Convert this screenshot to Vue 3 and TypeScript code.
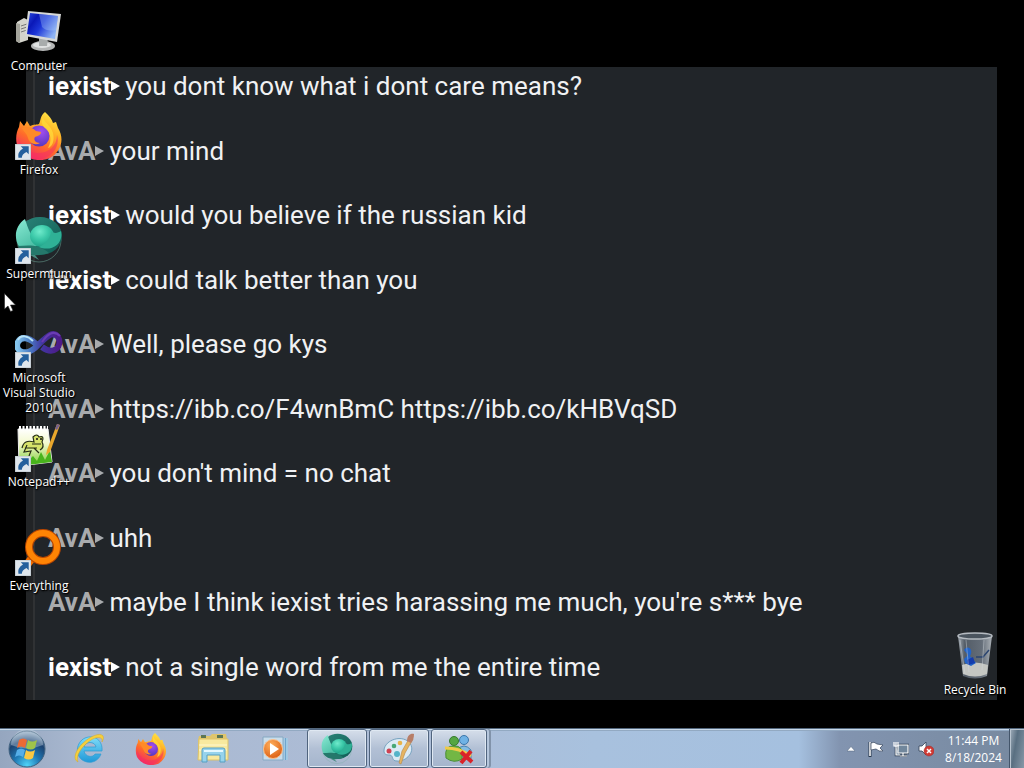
<script setup lang="ts">
interface Message { author: string; text: string }
interface Shortcut { icon: string; label: string; linked: boolean }
interface TaskItem { icon: string; label: string; running: boolean }

const messages: Message[] = [
  { author: 'iexist', text: 'you dont know what i dont care means?' },
  { author: 'AvA', text: 'your mind' },
  { author: 'iexist', text: 'would you believe if the russian kid' },
  { author: 'iexist', text: 'could talk better than you' },
  { author: 'AvA', text: 'Well, please go kys' },
  { author: 'AvA', text: 'https://ibb.co/F4wnBmC https://ibb.co/kHBVqSD' },
  { author: 'AvA', text: "you don't mind = no chat" },
  { author: 'AvA', text: 'uhh' },
  { author: 'AvA', text: "maybe I think iexist tries harassing me much, you're s*** bye" },
  { author: 'iexist', text: 'not a single word from me the entire time' },
]

const shortcuts: Shortcut[] = [
  { icon: 'computer', label: 'Computer', linked: false },
  { icon: 'firefox', label: 'Firefox', linked: true },
  { icon: 'supermium', label: 'Supermium', linked: true },
  { icon: 'studio', label: 'Microsoft Visual Studio 2010', linked: true },
  { icon: 'notepad', label: 'Notepad++', linked: true },
  { icon: 'everything', label: 'Everything', linked: true },
]

const tasks: TaskItem[] = [
  { icon: 'ie', label: 'Internet Explorer', running: false },
  { icon: 'firefox', label: 'Firefox', running: false },
  { icon: 'explorer', label: 'Windows Explorer', running: false },
  { icon: 'player', label: 'Windows Media Player', running: false },
  { icon: 'supermium', label: 'Supermium', running: true },
  { icon: 'paint', label: 'Paint', running: true },
  { icon: 'messenger', label: 'Messenger', running: true },
]
</script>

<template>
  <div class="screen">
    <svg class="sprites" aria-hidden="true">
      <defs>
        <linearGradient id="gBlue" x1="0" y1="0" x2="1" y2="0.6">
          <stop offset="0" stop-color="#2a4ae0" /><stop offset="0.3" stop-color="#0a18b8" />
          <stop offset="0.55" stop-color="#1c36d8" /><stop offset="1" stop-color="#8fb4f4" />
        </linearGradient>
        <linearGradient id="gFox" x1="0.85" y1="0" x2="0.3" y2="1">
          <stop offset="0" stop-color="#fff04a" /><stop offset="0.35" stop-color="#ffb327" />
          <stop offset="0.65" stop-color="#ff6a2a" /><stop offset="1" stop-color="#f0246e" />
        </linearGradient>
        <radialGradient id="gGlobe" cx="0.6" cy="0.3" r="0.8">
          <stop offset="0" stop-color="#a44df0" /><stop offset="1" stop-color="#4a35b8" />
        </radialGradient>
        <radialGradient id="gOrbTeal" cx="0.4" cy="0.3" r="0.7">
          <stop offset="0" stop-color="#6feacb" /><stop offset="0.5" stop-color="#3cc9a9" /><stop offset="1" stop-color="#1fa188" />
        </radialGradient>
        <linearGradient id="gTeal" x1="0" y1="0" x2="1" y2="1">
          <stop offset="0" stop-color="#2b8579" /><stop offset="1" stop-color="#0f5c54" />
        </linearGradient>
        <linearGradient id="gLeaf" x1="0" y1="0" x2="0.5" y2="1">
          <stop offset="0" stop-color="#8aead4" /><stop offset="1" stop-color="#4cbfa6" />
        </linearGradient>
        <linearGradient id="gStudio" x1="0" y1="0" x2="1" y2="0">
          <stop offset="0" stop-color="#86c6ee" /><stop offset="0.3" stop-color="#4a7cc4" />
          <stop offset="0.6" stop-color="#4234a0" /><stop offset="1" stop-color="#4d1a88" />
        </linearGradient>
        <linearGradient id="gNote" x1="0" y1="0" x2="0" y2="1">
          <stop offset="0" stop-color="#ffffff" /><stop offset="0.4" stop-color="#f3f9cc" /><stop offset="1" stop-color="#7ccb3a" />
        </linearGradient>
        <radialGradient id="gStart" cx="0.5" cy="0.95" r="0.9">
          <stop offset="0" stop-color="#4fd4f8" /><stop offset="0.4" stop-color="#1f78b4" />
          <stop offset="0.75" stop-color="#1c4270" /><stop offset="1" stop-color="#8fa8c0" />
        </radialGradient>
        <linearGradient id="gBin" x1="0" y1="0" x2="1" y2="0">
          <stop offset="0" stop-color="#b8c0c8" /><stop offset="0.2" stop-color="#5c6672" />
          <stop offset="0.7" stop-color="#717b87" /><stop offset="1" stop-color="#c4cad0" />
        </linearGradient>
        <radialGradient id="gOrange" cx="0.4" cy="0.3" r="0.8">
          <stop offset="0" stop-color="#ffb05c" /><stop offset="1" stop-color="#d8560c" />
        </radialGradient>
        <linearGradient id="gIe" x1="0" y1="0" x2="0" y2="1">
          <stop offset="0" stop-color="#7fdcf8" /><stop offset="1" stop-color="#1f98d8" />
        </linearGradient>
      </defs>

      <symbol id="computer" viewBox="0 0 48 48">
        <path d="M2 14 9 10 13 12V32L4 35 1 33Z" fill="#d4d4cc" />
        <path d="M1 15 5 16V35L1 33Z" fill="#a4a49c" />
        <path d="M6 18 12 16M6 21 12 19M6 24 12 22" stroke="#777" stroke-width="1" />
        <ellipse cx="28" cy="38" rx="12" ry="5" fill="#b4b6b6" />
        <ellipse cx="27" cy="37" rx="9" ry="3" fill="#e0e2e2" />
        <path d="M24 29H33L32 38H24Z" fill="#a8acac" />
        <path d="M13 3 46 6 42 34 10 28Z" fill="#d6d8d8" />
        <path d="M15 5 43 8 40 31 12 26Z" fill="url(#gBlue)" />
        <path d="M24 6 43 8 41 22Q32 24 27 19Z" fill="#a8ccfa" opacity=".35" />
      </symbol>

      <symbol id="firefox" viewBox="0 0 48 48">
        <path d="M30 0C34 4 37 7 38 11L41 10 43 16C50 27 46 40 35 46C24 51 9 47 3 36C0 29 1 20 4 15L5 9 9 14 12 9 15 14C19 12 22 13 24 12C26 8 25 4 30 0Z" fill="url(#gFox)" />
        <path d="M3 25C5 33 12 40 21 41C33 42 42 34 42 23C45 33 39 44 27 47C13 48 3 39 3 25Z" fill="#f52e64" opacity=".55" />
        <circle cx="24" cy="24" r="10.5" fill="url(#gGlobe)" />
        <path d="M7 16C12 14 17 15 21 19L26 20C26 23 23 24 20 25C18 28 21 31 25 31C20 34 14 31 13 26C12 22 9 20 7 16Z" fill="#ff8a28" />
        <path d="M28 4C28 10 36 13 38 21C40 29 37 35 33 36C37 29 36 21 31 17C26 13 26 8 28 4Z" fill="#ffd83a" opacity=".8" />
      </symbol>

      <symbol id="supermium" viewBox="0 0 48 48">
        <circle cx="24" cy="24" r="22" fill="none" stroke="#72ad9e" stroke-width="1" opacity=".5" />
        <ellipse cx="25" cy="20" rx="22" ry="19" fill="url(#gTeal)" />
        <path d="M10 3C13 13 16 20 24 29C17 32 8 36 4 31C-2 20 1 9 10 3Z" fill="url(#gLeaf)" />
        <path d="M3 30C12 30 22 27 34 37C22 41 8 40 3 30Z" fill="#25786b" />
        <ellipse cx="27" cy="20" rx="12" ry="11" fill="url(#gOrbTeal)" />
        <path d="M36 15C39 18 43 17 46 15C49 29 35 36 24 31C29 29 36 23 36 15Z" fill="#2fb196" />
        <path d="M15 39 24 44 20 39Z" fill="#488c80" />
      </symbol>

      <symbol id="studio" viewBox="0 0 48 48">
        <path d="M24 27C16 18 7 15 3 22C-1 30 9 37 20 28C30 19 37 9 43 17C48 26 39 36 27 27" fill="none" stroke="url(#gStudio)" stroke-width="6" />
        <path d="M27 22C32 15 38 9 45 16" fill="none" stroke="#6a3cb4" stroke-width="2" />
        <path d="M3 20C6 14 13 16 18 21" fill="none" stroke="#b8e4f8" stroke-width="2" />
      </symbol>

      <symbol id="notepad" viewBox="0 0 48 48">
        <path d="M3 5 33 5 37 38 4 42Z" fill="url(#gNote)" stroke="#eee" />
        <path d="M4 4H33" stroke="#fff" stroke-width="4" stroke-dasharray="2 1.5" />
        <path d="M7 24Q9 15 19 18L18 13Q22 9 24 13Q30 11 27 18Q30 23 25 26M12 21 9 28 16 27 14 32M19 24 24 29M10 24 22 24M17 20 26 20" fill="#d6e26a" stroke="#242c16" stroke-width="1.2" />
        <path d="M4 37 10 33 13 37 18 32 22 37 26 28 30 36 35 26 37 38 4 42Z" fill="#48b41c" />
        <path d="M22 14V16M26 14V16" stroke="#111" stroke-width="1.500" />
        <path d="M45 1 35 28 31 31 32 26 42 0Z" fill="#e9a72c" />
        <path d="M42 0 45 1 42 6 40 5Z" fill="#76628c" />
      </symbol>

      <symbol id="everything" viewBox="0 0 48 48">
        <path d="M20 26 8 42" stroke="#ef6b00" stroke-width="8" />
        <circle cx="28" cy="19" r="14" fill="none" stroke="#b84600" stroke-width="8" />
        <circle cx="28" cy="19" r="14" fill="none" stroke="#ff8404" stroke-width="6" />
      </symbol>

      <symbol id="bin" viewBox="0 0 48 48">
        <path d="M7 4H41L36 44Q24 49 12 44Z" fill="url(#gBin)" opacity=".85" />
        <path d="M11 33Q24 28 37 33L36 42Q24 47 12 42Z" fill="#c4c6c2" />
        <path d="M13 18C17 12 23 18 19 24L25 31 20 34 14 31 13 27 17 23Z" fill="#2264c8" />
        <path d="M16 28 22 25 24 31 17 33Z" fill="#143cae" />
        <path d="M25 25 32 25 38 18" fill="none" stroke="#2b4570" stroke-width="1.500" />
        <path d="M9 8 14 42M15 8 18 40M33 8 31 38" stroke="#d8dee4" stroke-width="1" opacity=".4" />
        <ellipse cx="24" cy="4" rx="17" ry="3" fill="#4a545e" stroke="#b4bac0" stroke-width="1.5" />
      </symbol>

      <symbol id="ie" viewBox="0 0 32 32">
        <path d="M29 18H11C12 24 20 25 22 21H28C25 29 17 31 11 28C1 23 3 9 12 5C22 1 30 8 29 18ZM11 14H23C22 8 12 8 11 14Z" fill="url(#gIe)" stroke="#2d9bd2" stroke-width=".7" />
        <path d="M5 29C-1 26 3 17 9 11C17 3 27-1 30 3C31 5 30 7 29 9C30 4 25 3 18 7C9 13 2 23 5 29Z" fill="#f5cf3d" stroke="#d7a925" stroke-width=".5" />
      </symbol>

      <symbol id="explorer" viewBox="0 0 32 32">
        <path d="M2 3H13L15 1H29L30 6V27H1V7Z" fill="#dfc56b" />
        <path d="M4 2H9V5H4ZM20 2H26V5H20Z" fill="#5c7654" />
        <path d="M2 6H31V27H1Z" fill="#f8e99f" stroke="#dcc26a" />
        <path d="M2 12H30M2 17H30" stroke="#fff8cf" />
        <path d="M5 29V17Q5 15 7 15H26Q28 15 28 17V29H23V22H10V29Z" fill="#96d3ec" stroke="#579fc2" />
        <path d="M7 18H26" stroke="#e4f8ff" stroke-width="2" />
      </symbol>

      <symbol id="player" viewBox="0 0 32 32">
        <path d="M14 5H29V27H14Z" fill="#6fa5cd" />
        <path d="M25 5V27M28 5V27" stroke="#d5ecf7" stroke-width="1" />
        <path d="M4 4H24V27H4Z" fill="#c9ddeb" stroke="#86a9c3" />
        <circle cx="14" cy="16" r="9.5" fill="url(#gOrange)" stroke="#f8c08c" />
        <path d="M11 10 20 16 11 22Z" fill="#fff" />
      </symbol>

      <symbol id="paint" viewBox="0 0 32 32">
        <path d="M1 19C0 8 17 1 26 9C34 18 23 29 14 28C8 28 11 23 7 22C4 22 2 22 1 19Z" fill="#dbeaf4" stroke="#76a2bf" />
        <circle cx="6" cy="18" r="2.5" fill="#cf4152" /><circle cx="11" cy="13" r="2.3" fill="#48a775" />
        <circle cx="17" cy="10" r="2.3" fill="#e8b34a" /><circle cx="14" cy="21" r="3" fill="#55b4c9" />
        <path d="M27 4 30 6 22 20 18 31 16 30 19 18Z" fill="#e5b461" stroke="#b78745" stroke-width=".6" />
        <path d="M24 8C24 2 28 0 31 1C31 5 30 8 28 10Z" fill="#b77e68" />
      </symbol>

      <symbol id="messenger" viewBox="0 0 32 32">
        <circle cx="21" cy="7" r="4.5" fill="#6fb2e5" stroke="#3c76a9" /><path d="M14 26V17Q21 9 28 17V26Z" fill="#83bce2" stroke="#4a83b0" />
        <circle cx="11" cy="8" r="4.5" fill="#55a642" stroke="#367b2e" /><path d="M3 25Q1 12 11 13Q21 12 19 26Q11 31 3 25Z" fill="#73b744" stroke="#4a8e36" />
        <path d="M2 15Q17 15 28 23" fill="none" stroke="#f0ca49" stroke-width="3" />
        <path d="M18 19 29 29M28 18 18 30" stroke="#d92329" stroke-width="4" />
      </symbol>

      <symbol id="arrow" viewBox="0 0 14 14">
        <path d="M0 0H14V14H0Z" fill="#dfe6ec" stroke="#b5bdc4" />
        <path d="M5 2H12V9L10 7Q6 9 6 12H3Q2 7 7 4Z" fill="#24609d" />
      </symbol>
    </svg>

    <main class="desktop">
      <section class="wallpaper" aria-label="Wallpaper">
        <p v-for="(message, i) in messages" :key="i" class="message">
          <span class="author" :class="{ own: message.author === 'iexist' }">
            {{ message.author }}<svg class="marker" viewBox="0 0 9 10" aria-hidden="true"><path d="M0 0 9 5 0 10Z" fill="currentColor" /></svg>
          </span>
          <span>{{ message.text }}</span>
        </p>
      </section>

      <nav class="shortcuts" aria-label="Desktop">
        <button v-for="item in shortcuts" :key="item.label" type="button" class="shortcut">
          <span class="picture">
            <svg class="large"><use :href="'#' + item.icon" /></svg>
            <svg v-if="item.linked" class="badge"><use href="#arrow" /></svg>
          </span>
          <span class="label">{{ item.label }}</span>
        </button>
      </nav>
      <button type="button" class="shortcut bin">
        <span class="picture"><svg class="large"><use href="#bin" /></svg></span>
        <span class="label">Recycle Bin</span>
      </button>
      <svg class="cursor" viewBox="0 0 12 20" aria-hidden="true">
        <path d="M.5.5V16L4 13 6.500 18.500 9 17.500 6.500 12H11.500Z" fill="#fff" stroke="#222" stroke-width=".6" />
      </svg>
    </main>

    <footer class="taskbar">
      <button type="button" class="start" aria-label="Start">
        <svg viewBox="0 0 38 38" class="orb">
          <circle cx="19" cy="19" r="18" fill="url(#gStart)" stroke="#41627f" />
          <path d="M3 15A16 16 0 0 1 35 15Q19 22 3 15Z" fill="#dce8f0" opacity=".35" />
          <path d="M11 10Q15 7 19 10L17 18Q13 15 9 18Z" fill="#ec6a35" />
          <path d="M20 10Q24 13 29 10L27 18Q23 21 18 18Z" fill="#9fc44a" />
          <path d="M9 20Q13 17 17 20L15 27Q11 24 7 27Z" fill="#56aee8" />
          <path d="M18 20Q22 23 27 20L25 28Q21 31 16 28Z" fill="#fbc842" />
        </svg>
      </button>
      <nav class="tasks" aria-label="Taskbar">
        <button
          v-for="task in tasks" :key="task.icon" type="button" class="task"
          :class="{ running: task.running, stacked: task.icon === 'messenger' }" :aria-label="task.label"
        >
          <svg class="small"><use :href="'#' + task.icon" /></svg>
        </button>
      </nav>
      <div class="tray">
        <button type="button" class="tool chevron" aria-label="Show hidden icons">
          <svg viewBox="0 0 8 5"><path d="M0 4.500 4 0 8 4.500Z" fill="#fff" stroke="#52677f" stroke-width=".5" /></svg>
        </button>
        <button type="button" class="tool" aria-label="Action Center">
          <svg viewBox="0 0 16 16"><path d="M2 1V16" stroke="#28384c" stroke-width="3" /><path d="M2 1V15" stroke="#fff" stroke-width="1.500" /><path d="M3 2Q6 0 9 3L15 4 12 7 15 10Q11 11 8 8L3 9Z" fill="#fff" stroke="#33445a" stroke-width=".7" /></svg>
        </button>
        <button type="button" class="tool" aria-label="Network">
          <svg viewBox="0 0 16 16"><path d="M5 4H15V12H5ZM7 15H14M10 12V15M3 6V14H7" fill="#71879c" stroke="#26374b" stroke-width="2.500" /><path d="M5 4H15V12H5ZM7 15H14M10 12V15M3 6V14H7" fill="#71879c" stroke="#fff" stroke-width="1.200" /><path d="M1 1V5H5V1M3 1V6" fill="none" stroke="#fff" stroke-width="1.200" /></svg>
        </button>
        <button type="button" class="tool" aria-label="Volume muted">
          <svg viewBox="0 0 16 16"><path d="M1 5H4L8 1V14L4 10H1Z" fill="#fff" stroke="#344358" stroke-width=".8" /><circle cx="11" cy="10" r="5" fill="#d13b35" stroke="#9f2827" stroke-width=".5" /><path d="M9 8 13 12M13 8 9 12" stroke="#fff" stroke-width="1.500" /></svg>
        </button>
        <time class="clock" datetime="2024-08-18T23:44"><span>11:44 PM</span><span>8/18/2024</span></time>
        <button type="button" class="peek" aria-label="Show desktop"></button>
      </div>
    </footer>
  </div>
</template>

<style>
body { margin: 0; background: #000; }
</style>

<style scoped>
.screen { display: flex; flex-direction: column; height: 100vh; overflow: hidden; background: #000; font-family: "Open Sans", "Noto Sans", sans-serif; }
.sprites { position: absolute; width: 0; height: 0; }
button { border: 0; padding: 0; background: none; font: inherit; color: inherit; }
.desktop { position: relative; flex: 1; min-height: 0; display: flex; justify-content: space-between; padding: 0 11px 0 1px; }
.wallpaper {
  position: absolute; inset: 67px 27px 28px 26px; box-sizing: border-box;
  display: flex; flex-direction: column; justify-content: space-between;
  padding: 1px 0 15px 22px;
  background: linear-gradient(to right, #222426 7px, #303234 7px, #303234 9px, #212529 9px);
  color: #f0f1f3; font-family: Roboto, sans-serif; font-size: 26px; line-height: 36px;
}
.message { display: flex; gap: 5px; margin: 0; white-space: nowrap; }
.author { display: flex; align-items: center; font-weight: 700; color: #a9abad; }
.author.own { color: #fff; }
.marker { width: 9px; height: 10px; }
.shortcuts { position: relative; display: flex; flex-direction: column; }
.shortcut {
  position: relative; display: flex; flex-direction: column; align-items: center; gap: 2px;
  box-sizing: border-box; width: 76px; height: 104px; padding-top: 8px;
  color: #fff; font-size: 12px; line-height: 15px; text-align: center; text-shadow: 0 1px 2px #000, 1px 1px 1px #000;
}
.bin { align-self: flex-end; }
.picture { position: relative; height: 48px; }
.large { display: block; width: 48px; height: 48px; }
.badge { position: absolute; left: 0; bottom: 0; width: 16px; height: 16px; }
.cursor { position: absolute; left: 4px; top: 293px; width: 12px; height: 20px; }
.taskbar {
  position: relative; display: flex; flex: none; height: 40px; box-sizing: border-box; border-top: 1px solid #53677d;
  box-shadow: inset 0 1px #c9d9ea, inset 0 2px #92a9c2;
  background: linear-gradient(to right, #95a6bf 0, #a9b8d0 8%, #adbdd7 40%, #a8c1de 58%, #a5c0df 78%, #8294b0 82%, #77899f 100%);
}
.start { width: 59px; display: flex; justify-content: center; align-items: center; padding-right: 5px; }
.orb { width: 38px; height: 38px; }
.tasks { display: flex; gap: 2px; flex: 1; }
.task { width: 60px; display: flex; align-items: center; justify-content: center; box-sizing: border-box; }
.small { width: 32px; height: 32px; }
.running {
  border: 1px solid #50647e; border-radius: 3px;
  background: linear-gradient(#d5deea, #b2c0d5 50%, #a5b5cc); box-shadow: inset 0 0 0 1px #dfe8f2;
}
.stacked { width: 56px; box-shadow: inset 0 0 0 1px #dfe8f2, 2px 0 #b5c6dc, 4px 0 #8193aa; }
.tray { display: flex; align-items: center; }
.tool { width: 25px; height: 16px; display: flex; justify-content: center; }
.tool svg { width: 16px; height: 16px; }
.chevron svg { width: 8px; }
.clock { display: flex; flex-direction: column; align-items: center; width: 71px; color: #fff; font-size: 12px; line-height: 17px; }
.peek { align-self: stretch; width: 15px; border-left: 1px solid #43556a; background: linear-gradient(100deg, #a0adba, #596f81 40%, #8798a7); box-shadow: inset 1px 1px #b8c4cf; }
</style>
